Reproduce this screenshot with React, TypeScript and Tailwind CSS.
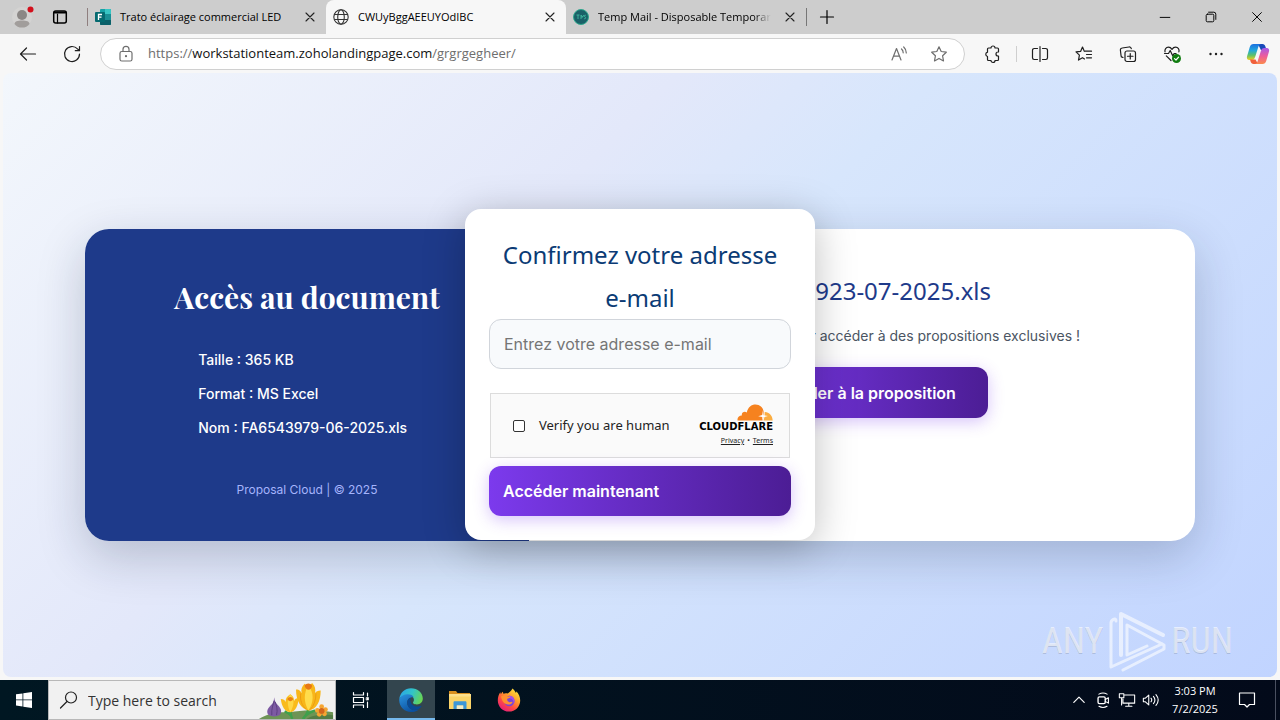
import React, { useState } from 'react';

type IconProps = {
  className?: string;
  children: React.ReactNode;
};

// Thin line icon on a 20px grid
const Icon = ({ className = 'size-5', children }: IconProps) => (
  <svg
    viewBox="0 0 20 20"
    className={className}
    fill="none"
    stroke="currentColor"
    strokeWidth="1.2"
    strokeLinecap="round"
    strokeLinejoin="round"
    aria-hidden="true"
  >
    {children}
  </svg>
);

const CloseIcon = () => (
  <Icon className="size-4">
    <path d="M5 5l10 10M15 5L5 15" strokeWidth="1.4" />
  </Icon>
);

const StarPath = 'M10 2.8l2.2 4.7 5.1.7-3.7 3.6.9 5.1L10 14.4l-4.5 2.5.9-5.1-3.7-3.6 5.1-.7z';

const FormsIcon = () => (
  <svg viewBox="0 0 16 16" className="size-4 shrink-0" aria-hidden="true">
    <rect x="5" y="0" width="11" height="16" rx="1" fill="#17a2a6" />
    <path d="M10 0h5a1 1 0 011 1v4h-6z" fill="#38c5c4" />
    <path d="M10 5h6v6h-6z" fill="#1a8f95" />
    <path d="M5 11h11v4a1 1 0 01-1 1H6a1 1 0 01-1-1z" fill="#0b6069" />
    <rect x="0" y="3" width="10" height="10" rx="1" fill="#056a70" />
    <path d="M3.5 11V5.5H7M3.5 8.2h3" stroke="#fff" strokeWidth="1.3" fill="none" />
  </svg>
);

const GlobeIcon = () => (
  <svg viewBox="0 0 16 16" className="size-4 shrink-0" fill="none" stroke="#333" strokeWidth="1.1" aria-hidden="true">
    <circle cx="8" cy="8" r="7.2" />
    <ellipse cx="8" cy="8" rx="3.3" ry="7.2" />
    <path d="M1.4 5.5h13.2M1.4 10.5h13.2" />
  </svg>
);

const MailTabIcon = () => (
  <svg viewBox="0 0 16 16" className="size-4 shrink-0" aria-hidden="true">
    <circle cx="8" cy="8" r="7.5" fill="#1a6168" stroke="#2fa88e" />
    <path d="M3.5 6h3M5 6v4M8 6v4M8 6l1.5 2L11 6M8 8h2M13 6.5c-1.5-1-2.5.8-1 1.4s.6 2.5-1 1.6" stroke="#3fb99f" strokeWidth=".9" fill="none" />
  </svg>
);

const CopilotIcon = () => (
  <svg viewBox="0 0 24 22" className="h-[22px] w-6" aria-hidden="true">
    <defs>
      <linearGradient id="copA" x1="0" y1="0" x2="0" y2="1">
        <stop offset="0" stopColor="#1b6fe0" />
        <stop offset=".4" stopColor="#21a8dc" />
        <stop offset=".7" stopColor="#5cc16b" />
        <stop offset="1" stopColor="#f2cf1d" />
      </linearGradient>
      <linearGradient id="copB" x1="0" y1="0" x2="0" y2="1">
        <stop offset="0" stopColor="#a65ae8" />
        <stop offset=".5" stopColor="#ee5c9b" />
        <stop offset="1" stopColor="#fb8a4c" />
      </linearGradient>
    </defs>
    <path d="M12 1h4.500c1.500 0 2.500 1 2.900 2.400L20.500 7h-5.600z" fill="#1849b8" />
    <path
      d="M7.500 1H15c-1.500.5-2.200 1.500-2.700 3L9.300 13.500c-.8 2.400-1.600 3.500-3.800 3.500H3.300C1.300 17 .5 15.300 1 13.400L3.800 4C4.400 2 5.600 1 7.500 1z"
      fill="url(#copA)"
    />
    <path d="M12 21H7.500c-1.500 0-2.500-1-2.900-2.400L4 16.500h5.500z" fill="#f0603c" />
    <path
      d="M16.500 21H9c1.500-.5 2.200-1.500 2.700-3l3-9.500C15.500 6.100 16.300 5 18.500 5h2.200c2 0 2.800 1.700 2.300 3.600L20.200 18c-.6 2-1.800 3-3.700 3z"
      fill="url(#copB)"
    />
  </svg>
);

const EdgeIcon = () => (
  <svg viewBox="0 0 24 24" className="size-6" aria-hidden="true">
    <defs>
      <linearGradient id="edgeTop" x1="0" y1=".3" x2="1" y2=".6">
        <stop offset="0" stopColor="#2aa6e8" />
        <stop offset=".5" stopColor="#32c4c8" />
        <stop offset="1" stopColor="#6ad64f" />
      </linearGradient>
      <linearGradient id="edgeLow" x1="0" y1="0" x2=".6" y2="1">
        <stop offset="0" stopColor="#2b94e0" />
        <stop offset="1" stopColor="#0b4f9e" />
      </linearGradient>
    </defs>
    <path d="M.3 11C1 4.700 6 .2 12 .2c6.700 0 11.800 4.700 11.800 10.300 0 3.500-2.600 5.900-5.900 5.900-3.200 0-4.600-1.200-3.500-2.600 1.700-2.800-.6-6.600-5.400-6.600C5.200 7.200 2 8.300.3 11z" fill="url(#edgeTop)" />
    <path d="M.3 11C1.700 8 5 6.300 8.700 6.300c3.300 0 5.300 1.300 5.900 2.900-3.600-.4-6.400 2-6.400 5.500 0 4 3.400 7.300 7.600 7.300 2.200 0 3.700-.5 4.800-1.100C18.500 22.900 15.500 24 12 24 5 24-.5 18 .3 11z" fill="url(#edgeLow)" />
    <path d="M8.200 14.700c0-2.500 1.300-4.500 3.500-5.300-1.600 4.400 1.600 9.100 7 9.100 1.300 0 2.400-.3 3.300-.8.400-.2.700.2.500.5C21 20.600 18.700 22 15.800 22c-4.200 0-7.600-3.300-7.600-7.300z" fill="#0a4a94" />
  </svg>
);

const ExplorerIcon = () => (
  <svg viewBox="0 0 24 20" className="h-5 w-6" aria-hidden="true">
    <path d="M1 1h7l1.500 2H22v4H1z" fill="#d9901f" />
    <rect x="1" y="4" width="22" height="15" rx=".6" fill="#fbd468" />
    <path d="M1 4h22v2.500H1z" fill="#fde08c" />
    <path d="M5.500 19v-6.500c0-.8.500-1.300 1.300-1.300h10.400c.8 0 1.300.5 1.300 1.300V19h-3.300v-3.500H8.800V19z" fill="#3c97d8" />
    <path d="M8.800 15.500h6.400V19H8.800z" fill="#f3ecc6" />
  </svg>
);

const FirefoxIcon = () => (
  <svg viewBox="0 0 24 24" className="size-6" aria-hidden="true">
    <defs>
      <linearGradient id="ffBody" x1=".85" y1=".05" x2=".2" y2="1">
        <stop offset="0" stopColor="#ffe33c" />
        <stop offset=".35" stopColor="#ffa02b" />
        <stop offset=".65" stopColor="#ff4a44" />
        <stop offset="1" stopColor="#e3197f" />
      </linearGradient>
    </defs>
    <path d="M15.500.5c1.500 1.500 2.600 2.700 3.300 4.300.5-.3.600-.9.500-1.600 2.500 2.300 3.900 5.800 3.900 9.200C23.200 18.600 18.300 23.500 12 23.500S.8 18.600.8 12.400c0-3.200.9-5.900 2.500-8.200l.6 2C4.500 5 5 4.300 5.800 3.700l.6 2c1.300-.6 3-.7 4.300-.3 1.200-.6 3.300-2 4.800-4.900z" fill="url(#ffBody)" />
    <circle cx="12.300" cy="13" r="5.200" fill="#7a45d8" />
    <path d="M12 7.800c3-.3 5.500 2 5.500 5.200 0 1-.3 2-.8 2.800.2-3-1.300-5.300-4.200-5.600z" fill="#a54de8" />
    <path d="M4 8.500c2-1.700 4.500-1.700 6.300-.3l3 .5c-.3 1.300-1.800 1.700-3 2.100-.6 1.500.6 3.200 2.300 3.400 1.200.1 2-.6 3-.3-.8 1.900-2.500 2.700-4.500 2.600C7.300 16.300 5 13.500 4 8.500z" fill="#ff9130" />
  </svg>
);

const CrocusArt = () => (
  <svg viewBox="0 0 78 40" className="h-[38px] w-[78px] shrink-0" aria-hidden="true">
    <path d="M0 40c8-5 18-8 32-7 16-3 34-2 46 0v7z" fill="#6d9455" />
    <path d="M50 40c6-4 16-5 28-4v4z" fill="#547d45" />
    <path d="M16 17c.5 4 1.500 6 4 8.500 3 3 4.500 6 2.500 9.500-2 3-11 3-13 0-2-4 .5-7 3-9.500 2.500-2 3.300-4.500 3.500-8.500z" fill="#7d5aa3" />
    <path d="M16 21c-1 4-3 8-2.500 15M17 22c1.500 4 3 8 1.500 14" stroke="#5b3e80" fill="none" />
    <path d="M33 31c0 3 1 6 2 9M52 30c-1 4-3 7-6 10M35 40c-1-5-4-6-8-8M47 40c1-5 7-7 12-9" stroke="#3fa04b" strokeWidth="2.500" fill="none" />
    <path d="M23 19c3 0 4 1 5 3 0-4 2-6 5-8 3 2 4 4 4 7 1-2 2-3 5-3-1 8-3 14-9 15-6-1-9-6-10-14z" fill="#f9bb1c" />
    <path d="M33 14c-3 4-4 11 0 19 4-7 5-14 0-19z" fill="#ffd847" />
    <path d="M30 19c1-3 5-3 6 0-1 3-5 3-6 0z" fill="#e98012" />
    <path d="M39 9c4 0 5 2 6 4-1-4 0-7 3-10l4 3 4-4c3 3 4 7 3 11 1-2 3-3 6-3 0 11-4 20-13 21-8-2-13-10-13-22z" fill="#f8b61a" />
    <path d="M52 5c-5 7-5 17 0 26 6-9 6-19 0-26z" fill="#ffdc4c" />
    <path d="M44 13c-1 7 1 13 6 17M60 13c0 7-2 13-6 17" stroke="#eb9a12" fill="none" />
    <path d="M48 5c2-3 6-3 8 0-1 5-6 6-8 0z" fill="#e87816" />
    <circle cx="66" cy="27" r="2.500" fill="#f6a531" />
    <circle cx="61.500" cy="31" r="2.500" fill="#f6a531" />
    <circle cx="70" cy="30" r="2.500" fill="#f6a531" />
    <circle cx="63.500" cy="35" r="2.500" fill="#f6a531" />
    <circle cx="69" cy="34.500" r="2.500" fill="#f6a531" />
    <circle cx="66" cy="31.500" r="3" fill="#d4661c" />
  </svg>
);

type TabProps = {
  icon: React.ReactNode;
  title: string;
  active?: boolean;
  faded?: boolean;
};

const Tab = ({ icon, title, active, faded }: TabProps) => (
  <div
    role="tab"
    aria-selected={!!active}
    className={`flex h-full w-[240px] items-center gap-2 pr-2 pl-[7px] ${active ? 'rounded-t-lg bg-[#f7f7f7]' : ''}`}
  >
    {icon}
    <span className="flex-1 pl-px text-[11px] whitespace-nowrap">
      <span className={faded ? 'mask-r-from-90%' : ''}>{title}</span>
    </span>
    <button type="button" aria-label="Close tab" className="text-[#222]">
      <CloseIcon />
    </button>
  </div>
);

const ToolButton = ({ label, children }: { label: string; children: React.ReactNode }) => (
  <button type="button" aria-label={label} className="flex h-8 w-11 items-center justify-center">
    {children}
  </button>
);

const TitleBar = () => (
  <div className="flex h-[34px] items-center bg-[#cdcdcd]">
    <div className="flex w-[87px] items-center">
      <button type="button" aria-label="Profile" className="ml-3">
        <svg viewBox="0 0 22 24" className="h-6 w-[22px]" aria-hidden="true">
          <circle cx="10" cy="12" r="10" fill="#d4d3d2" />
          <circle cx="10" cy="10" r="5" fill="#8b8785" />
          <path d="M2.500 19c0-2.500 3-3.500 7.500-3.500s7.500 1 7.500 3.500c-1.500 2.500-4.500 3.600-7.500 3.600S4 21.500 2.500 19z" fill="#a19d9b" />
          <circle cx="18.500" cy="4.500" r="3" fill="#d3101c" />
        </svg>
      </button>
      <button type="button" aria-label="Tab actions" className="ml-4">
        <Icon>
          <rect x="3.700" y="4" width="12.600" height="12" rx="2" strokeWidth="1.500" />
          <path d="M4.500 5.500h11" strokeWidth="2" />
          <path d="M7.500 7v9" />
        </Icon>
      </button>
    </div>
    <div className="h-[18px] w-px bg-[#8f7f7f]" />
    <div role="tablist" className="flex h-full min-w-0">
      <div className="flex w-[238px]">
        <Tab icon={<FormsIcon />} title="Trato éclairage commercial LED" />
      </div>
      <Tab icon={<GlobeIcon />} title="CWUyBggAEEUYOdIBC" active />
      <Tab icon={<MailTabIcon />} title="Temp Mail - Disposable Temporar" faded />
    </div>
    <div className="h-[18px] w-px bg-[#777]" />
    <button type="button" aria-label="New tab" className="ml-2.5">
      <Icon>
        <path d="M10 3.500v13M3.500 10h13" />
      </Icon>
    </button>
    <div className="ml-auto flex">
      <button type="button" aria-label="Minimize" className="flex w-[46px] justify-center">
        <Icon className="size-4">
          <path d="M4 10.500h12" />
        </Icon>
      </button>
      <button type="button" aria-label="Restore" className="flex w-[46px] justify-center">
        <Icon className="size-4">
          <rect x="4" y="6.500" width="9.500" height="9.500" rx="1.500" />
          <path d="M7 4h6.500A2.500 2.500 0 0116 6.500V13" />
        </Icon>
      </button>
      <button type="button" aria-label="Close" className="flex w-[46px] justify-center">
        <Icon className="size-4">
          <path d="M4.500 4.500l11 11M15.500 4.500l-11 11" />
        </Icon>
      </button>
    </div>
  </div>
);

const Toolbar = () => (
  <div className="flex h-[39px] items-center bg-[#f7f7f7] pr-0.5 pl-1.5 text-[#1f1f1f]">
    <ToolButton label="Back">
      <Icon>
        <path d="M17.500 10h-15M8.500 4l-6 6 6 6" />
      </Icon>
    </ToolButton>
    <ToolButton label="Refresh">
      <Icon>
        <path d="M17.500 10a7.500 7.500 0 11-2-5.100l1.700 1.600M17.500 2.500v4.200h-4.200" />
      </Icon>
    </ToolButton>
    <div className="mx-1.5 flex h-8 min-w-0 flex-1 items-center rounded-full border border-[#d0d0d0] bg-white px-[15px] text-[#6e6e6e]">
      <button type="button" aria-label="Site information">
        <Icon>
          <rect x="4" y="7.500" width="12" height="9.500" rx="1.800" />
          <path d="M7 7.500V5.300a3 3 0 016 0v2.200" />
          <circle cx="10" cy="12.200" r=".5" fill="currentColor" />
        </Icon>
      </button>
      <button type="button" aria-label="Address" className="ml-3 min-w-0 flex-1 truncate text-left text-[13px]">
        https://<span className="text-[#111]">workstationteam.zoholandingpage.com</span>/grgrgegheer/
      </button>
      <button type="button" aria-label="Read aloud" className="mr-5">
        <Icon>
          <path d="M3 16L7.500 4.500 12 16M4.500 12.200h6M12.500 5c1.200 1 1.700 2.300 1.700 3.800M14.700 3c1.600 1.400 2.600 3.600 2.600 6" />
        </Icon>
      </button>
      <button type="button" aria-label="Add to favorites">
        <Icon>
          <path d={StarPath} />
        </Icon>
      </button>
    </div>
    <ToolButton label="Extensions">
      <Icon>
        <path d="M5.500 4H8a2 2 0 014 0h2.500a1 1 0 011 1v3H15a2 2 0 000 4h.5v3.500a1 1 0 01-1 1H12a2 2 0 01-4 0H5.500a1 1 0 01-1-1V12.500a2.200 2.200 0 010-4.300V5a1 1 0 011-1z" />
      </Icon>
    </ToolButton>
    <div className="mx-px h-4 w-px bg-[#cfcfcf]" />
    <ToolButton label="Split screen">
      <Icon>
        <path d="M7.500 4.500H4.200A1.700 1.700 0 002.500 6.200v7.600a1.700 1.700 0 001.700 1.700h3.300M12.500 4.500h3.300a1.700 1.700 0 011.700 1.700v7.600a1.700 1.700 0 01-1.700 1.700h-3.300M10 2.500v15" />
      </Icon>
    </ToolButton>
    <ToolButton label="Favorites">
      <Icon>
        <path d="M11 7.200h6.500M12.500 10.500h5M12.500 13.800h5" />
        <path d="M10.300 7.300L8.500 3 6.600 7.400l-4.600.5 3.400 3.200-.9 5 4-2.400 2 1.200" />
      </Icon>
    </ToolButton>
    <ToolButton label="Collections">
      <Icon>
        <rect x="7" y="7" width="10.500" height="10.500" rx="2" />
        <path d="M12.250 9.500v5.500M9.500 12.250H15M5 13.500l-.4-.1A2 2 0 013 11.200l-.6-5A2 2 0 014.200 4l6.800-1a2 2 0 012.300 1.700" />
      </Icon>
    </ToolButton>
    <ToolButton label="Browser essentials">
      <Icon>
        <path d="M2.500 9.500h4l1.700-3 2.600 5.500 1.300-2.500h2M3 7.800c-.5-2.600 1-4.600 3.400-4.600 1.500 0 2.700.8 3.600 2.200.9-1.400 2.100-2.200 3.600-2.200 2.500 0 4 2.100 3.300 4.700M4.300 11.800L9 16.500" />
        <circle cx="14.500" cy="14.500" r="4.500" fill="#107c10" stroke="none" />
        <path d="M12.500 14.600l1.500 1.400 2.600-2.800" stroke="#fff" />
      </Icon>
    </ToolButton>
    <ToolButton label="Settings and more">
      <Icon>
        <g fill="currentColor" stroke="none">
          <circle cx="4.500" cy="10" r="1.200" />
          <circle cx="10" cy="10" r="1.200" />
          <circle cx="15.500" cy="10" r="1.200" />
        </g>
      </Icon>
    </ToolButton>
    <button type="button" aria-label="Copilot" className="flex h-8 w-10 items-center justify-center">
      <CopilotIcon />
    </button>
  </div>
);

const DocumentCard = () => (
  <div className="flex w-full max-w-[1110px] overflow-hidden rounded-3xl bg-white shadow-[0_16px_48px_rgba(20,30,60,0.22)]">
    <section className="flex w-2/5 justify-center bg-[#1e3a8a] pt-12 pb-10 text-white">
      <div>
        <h1 className="font-['Playfair_Display','Liberation_Serif',serif] text-3xl leading-10 font-bold">
          Accès au document
        </h1>
        <ul className="mt-8 space-y-3 pl-6 text-sm leading-[22px] font-medium">
          <li>Taille : 365 KB</li>
          <li>Format : MS Excel</li>
          <li>Nom : FA6543979-06-2025.xls</li>
        </ul>
        <p className="mt-10 text-center text-xs leading-[22px] text-[#a5b4fc]">Proposal Cloud | © 2025</p>
      </div>
    </section>
    <section className="flex w-3/5 flex-col items-center gap-5 pt-12 whitespace-nowrap">
      <h2 className="font-['Noto_Sans',sans-serif] text-2xl leading-7 text-[#1e3a8a]">FA6543923-07-2025.xls</h2>
      <p className="text-sm leading-[22px] text-[#4b5563]">Connectez-vous vite pour accéder à des propositions exclusives !</p>
      <button
        type="button"
        className="h-[51px] rounded-xl bg-linear-to-r from-[#7c3aed] to-[#4c1d95] px-8 text-base font-semibold text-white shadow-[0_4px_16px_rgba(124,58,237,0.3)]"
      >
        Accéder à la proposition
      </button>
    </section>
  </div>
);

const CloudflareBadge = () => (
  <div className="flex flex-col items-end">
    <svg viewBox="0 0 36 17" className="h-[17px] w-9" aria-hidden="true">
      <path d="M.5 16.500c-.3-3 1.500-5 4.300-5-.4-3 2.700-4.600 5-3C11 3 14.500.5 18.500.5c4.300 0 7.500 3 8.300 7.200.4 3-.3 6-1.300 8.800z" fill="#f6821f" />
      <path d="M26.500 16.500l1-3.500.2-5c4.300-.2 7.800 3.500 8 8.500z" fill="#fbad41" />
      <path d="M26 6l.7 5.200L31 12l-4.500 1.300-1 3.200-.3-3.500-4-.7 4-1.300z" fill="#fff" />
    </svg>
    <span className="font-['DejaVu_Sans',sans-serif] text-[10px] leading-3 font-bold text-black">CLOUDFLARE</span>
    <div className="flex items-center gap-[3px] pt-0.5 font-['Noto_Sans',sans-serif] text-[7px] leading-3 text-[#222]">
      <a href="#privacy" className="underline">Privacy</a>
      <span>•</span>
      <a href="#terms" className="underline">Terms</a>
    </div>
  </div>
);

const EmailModal = () => {
  const [email, setEmail] = useState('');
  const [human, setHuman] = useState(false);

  return (
    <form
      className="w-[350px] rounded-2xl bg-white p-6 shadow-[0_8px_40px_rgba(0,0,0,0.25)]"
      onSubmit={(e) => e.preventDefault()}
    >
      <h2 className="text-center font-['Noto_Sans',sans-serif] text-2xl leading-[43px] text-[#0b3b75]">
        <label htmlFor="email">
          Confirmez votre adresse <span className="whitespace-nowrap">e-mail</span>
        </label>
      </h2>
      <input
        id="email"
        type="email"
        value={email}
        onChange={(e) => setEmail(e.target.value)}
        placeholder="Entrez votre adresse e-mail"
        className="h-[50px] w-full rounded-xl border border-[#d1d5db] bg-[#f8fafc] px-3.5 text-base placeholder:text-[#757575]"
      />
      <div className="mx-px mt-6 flex h-[65px] items-center justify-between border border-[#dcdcdc] bg-[#fafafa] pr-4 pl-[22px]">
        <div className="flex items-center gap-3.5">
          <input
            id="human"
            type="checkbox"
            checked={human}
            onChange={(e) => setHuman(e.target.checked)}
            className="size-3 appearance-none rounded-xs border border-[#333] bg-white checked:bg-[#333]"
          />
          <label htmlFor="human" className="font-['Noto_Sans',sans-serif] text-[13px] text-[#232323]">
            Verify you are human
          </label>
        </div>
        <CloudflareBadge />
      </div>
      <button
        type="submit"
        className="mt-2 h-[50px] w-full rounded-xl bg-linear-to-r from-[#7c3aed] to-[#4c1d95] px-3.5 text-left text-base font-semibold text-white shadow-[0_4px_16px_rgba(124,58,237,0.3)]"
      >
        Accéder maintenant
      </button>
    </form>
  );
};

const Watermark = () => (
  <div className="absolute right-11 bottom-1 flex items-center gap-1 font-['Liberation_Sans_Narrow','Roboto_Condensed','Liberation_Sans',sans-serif] text-4xl text-white/60 text-shadow-2xs">
    <span>ANY</span>
    <svg viewBox="0 0 60 64" className="h-16 w-[60px]" fill="none" stroke="#fff" strokeLinecap="round" strokeLinejoin="round" opacity=".6" aria-hidden="true">
      <path d="M9 12C9 8 4 11 4 14v44l11-5 40-18" strokeWidth="3" />
      <path d="M14 46V5l42 21" strokeWidth="4" />
      <path d="M16 61l41-21v-4L20 16v30l20-9" strokeWidth="3" />
    </svg>
    <span>RUN</span>
  </div>
);

const Taskbar = () => (
  <div className="flex h-10 items-center bg-linear-to-r from-[#001722] to-[#030a1a] text-white">
    <button type="button" aria-label="Start" className="flex h-full w-12 items-center justify-center">
      <svg viewBox="0 0 16 16" className="size-4" fill="#fff" aria-hidden="true">
        <path d="M0 2.300l6.500-.9v6.100H0zM7.300 1.300L16 0v7.500H7.300zM0 8.300h6.500v6.200L0 13.600zM7.300 8.300H16V16l-8.700-1.300z" />
      </svg>
    </button>
    <div className="flex h-full w-[288px] items-center border border-[#b8b8b8] bg-[#f1f1f1] pl-2.5 text-[#222]">
      <label htmlFor="search" aria-label="Search">
        <Icon>
          <circle cx="12" cy="7.500" r="5.500" />
          <path d="M8 11.500L1.500 18" />
        </Icon>
      </label>
      <input
        id="search"
        type="text"
        placeholder="Type here to search"
        className="ml-[9px] min-w-0 flex-1 bg-transparent text-[14px] placeholder:text-[#333]"
      />
      <CrocusArt />
    </div>
    <button type="button" aria-label="Task view" className="flex h-full w-[51px] items-center justify-center pr-0.5">
      <Icon>
        <path d="M2.500 2.500V5h10V2.500M2.500 17.500V15h10v2.500M2.500 7.500h10v5h-10zM16.500 3v3M16.500 12v5.500" />
        <path d="M15.500 7.500h2V10h-2z" fill="currentColor" strokeWidth=".6" />
      </Icon>
    </button>
    <button type="button" aria-label="Edge" className="flex h-full w-12 items-center justify-center border-b-2 border-[#76b9ed] bg-[#33454e] pt-0.5">
      <EdgeIcon />
    </button>
    <button type="button" aria-label="File Explorer" className="flex h-full w-[49px] items-center justify-center">
      <ExplorerIcon />
    </button>
    <button type="button" aria-label="Firefox" className="flex h-full w-[49px] items-center justify-center">
      <FirefoxIcon />
    </button>
    <div className="ml-auto flex h-full items-center">
      <button type="button" aria-label="Hidden icons" className="flex w-6 justify-center">
        <Icon className="size-4">
          <path d="M3.500 13L10 6.500l6.500 6.500" strokeWidth="1.500" />
        </Icon>
      </button>
      <button type="button" aria-label="Meet now" className="flex w-6 justify-center">
        <Icon className="size-[18px]">
          <rect x="4.500" y="6.500" width="8" height="7.500" rx="1.500" strokeWidth="1.500" />
          <path d="M12.500 9.500l3.500-2v6l-3.500-2M5.500 3.500c3-1.700 6-1.700 9 0M5.500 17c3 1.700 6 1.700 9 0" />
        </Icon>
      </button>
      <button type="button" aria-label="Network" className="flex w-6 justify-center">
        <Icon className="size-[18px]">
          <path d="M7.500 4.500h11v9h-13V9M12 13.500V17M8.500 17h7M1.500 3h5v4.500h-5zM4 7.500v8" />
        </Icon>
      </button>
      <button type="button" aria-label="Volume" className="flex w-6 justify-center">
        <Icon className="size-[18px]">
          <path d="M1.500 8h2.300L7.500 4.500v11L3.800 12H1.500zM10 8c1 1.200 1 2.800 0 4M12.700 6c2 2.400 2 5.600 0 8M15.500 4c3 3.600 3 8.400 0 12" />
        </Icon>
      </button>
      <div className="w-16 text-center text-[11px] leading-[18px]">
        <p>3:03 PM</p>
        <p>7/2/2025</p>
      </div>
      <button type="button" aria-label="Notifications" className="flex w-10 justify-center">
        <Icon>
          <path d="M2.500 3h15v11.500h-5L10 17l-2.500-2.500h-5z" />
        </Icon>
      </button>
      <div className="ml-2 h-full w-[5px] border-l border-[#4a5060]" />
    </div>
  </div>
);

const App = () => (
  <div className="flex min-h-screen flex-col bg-[#f7f7f7] font-['Segoe_UI','Open_Sans',sans-serif] text-black">
    <TitleBar />
    <Toolbar />
    <main className="relative mx-[3px] mb-[3px] flex flex-1 items-center justify-center overflow-hidden rounded-lg bg-[linear-gradient(135deg,#f3f7fc_0%,#e3e8fa_36%,#d7e6fc_50%,#c1d4ff_100%)] px-6 pt-5 font-[Inter,sans-serif]">
      <DocumentCard />
      <div className="absolute inset-0 flex items-center justify-center pb-px">
        <EmailModal />
      </div>
      <Watermark />
    </main>
    <Taskbar />
  </div>
);

export default App;
